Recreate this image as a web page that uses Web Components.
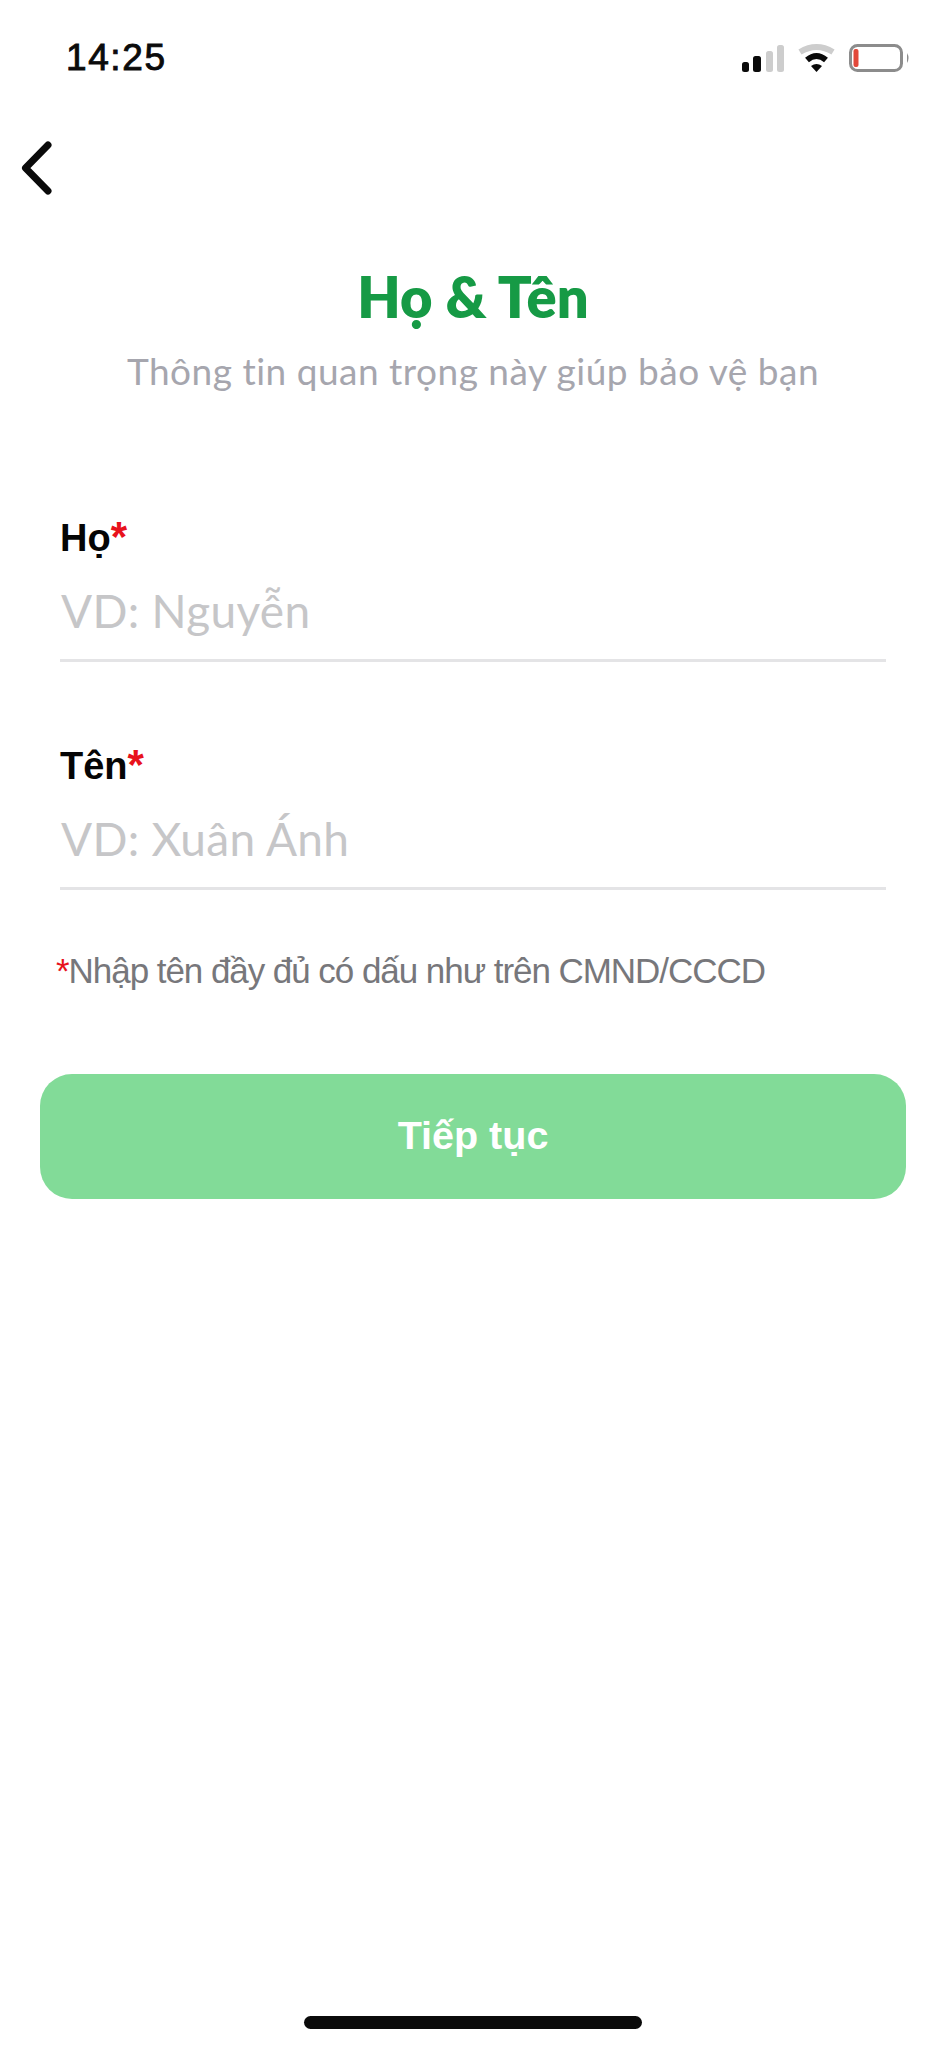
<!DOCTYPE html>
<html lang="vi">
<head>
<meta charset="utf-8">
<title>Họ & Tên</title>
<style>
  html, body { margin: 0; background: #fff; }
  body { width: 946px; height: 2048px; overflow: hidden; }
</style>
</head>
<body>
<name-screen>
  <status-bar slot="status" time="14:25"></status-bar>
  <back-button slot="nav"></back-button>
  <screen-heading slot="heading" title="Họ &amp; Tên" sub="Thông tin quan trọng này giúp bảo vệ bạn"></screen-heading>
  <name-field label="Họ" hint="VD: Nguyễn"></name-field>
  <name-field label="Tên" hint="VD: Xuân Ánh" style="margin-top:82px"></name-field>
  <form-note>Nhập tên đầy đủ có dấu như trên CMND/CCCD</form-note>
  <next-button>Tiếp tục</next-button>
</name-screen>

<script>
class NameScreen extends HTMLElement {
  constructor() {
    super();
    this.attachShadow({ mode: 'open' });
  }
  connectedCallback() {
    this.shadowRoot.innerHTML = `
<style>
  :host { display: flex; flex-direction: column; width: 946px; height: 2048px; position: relative; background: #fff; }
  #form { display: flex; flex-direction: column; padding: 0 40px 0 40px; }
  #bar { flex: 1; display: flex; align-items: flex-end; justify-content: center; padding-bottom: 19px; }
  #bar i { display: block; width: 338px; height: 13px; border-radius: 7px; background: #0a0a0a; }
</style>
<slot name="status"></slot>
<slot name="nav"></slot>
<slot name="heading"></slot>
<div id="form"><slot></slot></div>
<div id="bar"><i></i></div>`;
  }
}

class StatusBar extends HTMLElement {
  constructor() {
    super();
    this.attachShadow({ mode: 'open' });
  }
  connectedCallback() {
    this.shadowRoot.innerHTML = `
<style>
  :host { display: flex; align-items: flex-start; justify-content: space-between; height: 90px; padding: 36px 36px 0 66px; box-sizing: border-box; }
  #time { font: 400 37px/44px "Liberation Sans", Arial, sans-serif; color: #0b0b0b; letter-spacing: 1.6px; -webkit-text-stroke: .9px #0b0b0b; }
  svg { display: block; }
</style>
<div id="time">${this.getAttribute('time')}</div>
<svg width="172" height="34" viewBox="0 0 172 34" style="margin-top:4px">
  <rect x="4" y="22" width="7" height="10" rx="2.5" fill="#0a0a0a"/>
  <rect x="15" y="16" width="8" height="16" rx="2.5" fill="#0a0a0a"/>
  <rect x="28" y="11" width="7" height="21" rx="2.5" fill="#cdcdcd"/>
  <rect x="39" y="5" width="7" height="27" rx="2.5" fill="#cdcdcd"/>
  <path d="M62 12 Q78.5 2 95 12" fill="none" stroke="#cdcdcd" stroke-width="6"/>
  <path d="M69 20 Q78.5 12 88 20" fill="none" stroke="#0a0a0a" stroke-width="6"/>
  <path d="M73 26 Q78.5 22 84 26 L78.5 32Z" fill="#0a0a0a"/>
  <rect x="112.5" y="5.5" width="51" height="25" rx="7" fill="none" stroke="#8c8c8c" stroke-width="3"/>
  <rect x="115.5" y="9" width="5" height="18" rx="2" fill="#e2483a"/>
  <path d="M169 13 Q172 18 169 23Z" fill="#8c8c8c"/>
</svg>`;
  }
}

class BackButton extends HTMLElement {
  constructor() {
    super();
    this.attachShadow({ mode: 'open' });
  }
  connectedCallback() {
    this.shadowRoot.innerHTML = `
<style>
  :host { display: block; height: 114px; padding: 50px 0 0 20px; box-sizing: border-box; }
  svg { display: block; }
</style>
<svg width="36" height="58" viewBox="0 0 36 58">
  <path d="M28 5 L5.5 28 L28 51" fill="none" stroke="#0a0a0a" stroke-width="7" stroke-linecap="round" stroke-linejoin="round"/>
</svg>`;
  }
}

class ScreenHeading extends HTMLElement {
  constructor() {
    super();
    this.attachShadow({ mode: 'open' });
  }
  connectedCallback() {
    this.shadowRoot.innerHTML = `
<style>
  :host { display: block; text-align: center; height: 312px; font-family: Lato, "Noto Sans", sans-serif; }
  h1 { margin: 0; padding-top: 61px; font-size: 56px; line-height: 64px; font-weight: 800; color: #169a45; }
  p { margin: 20px 0 0; font-size: 37px; line-height: 44px; letter-spacing: .5px; color: #a6a6ae; }
</style>
<h1>${this.getAttribute('title').replace('&', '&amp;')}</h1>
<p>${this.getAttribute('sub')}</p>`;
  }
}

class NameField extends HTMLElement {
  constructor() {
    super();
    this.attachShadow({ mode: 'open' });
  }
  connectedCallback() {
    this.shadowRoot.innerHTML = `
<style>
  :host { display: block; margin: 0 20px 0 20px; }
  #lab { font: 700 38px/44px "Liberation Sans", Arial, sans-serif; color: #050505; }
  #lab b { color: #e8121c; font-size: 42px; line-height: 0; }
  #hint { font: 400 46px/56px Lato, "Noto Sans", sans-serif; letter-spacing: .3px; color: #c6c6c8; margin-top: 23px; padding: 0 0 20px 1px; border-bottom: 3px solid #e4e4e6; }
</style>
<div id="lab">${this.getAttribute('label')}<b>*</b></div>
<div id="hint">${this.getAttribute('hint')}</div>`;
  }
}

class FormNote extends HTMLElement {
  constructor() {
    super();
    this.attachShadow({ mode: 'open' });
  }
  connectedCallback() {
    this.shadowRoot.innerHTML = `
<style>
  :host { display: block; margin: 59px 0 0 16px; font: 400 35px/44px "Liberation Sans", Arial, sans-serif; color: #77777b; letter-spacing: -1.05px; }
  b { color: #e8121c; font-weight: 400; }
</style>
<b>*</b><slot></slot>`;
  }
}

class NextButton extends HTMLElement {
  constructor() {
    super();
    this.attachShadow({ mode: 'open' });
  }
  connectedCallback() {
    this.shadowRoot.innerHTML = `
<style>
  :host { display: flex; align-items: center; justify-content: center; height: 125px; box-sizing: border-box; padding-bottom: 4px; margin-top: 81px; border-radius: 32px; background: #82db98; color: #fff; font: 700 39.5px/44px "Liberation Sans", Arial, sans-serif; }
</style>
<slot></slot>`;
  }
}

customElements.define('name-screen', NameScreen);
customElements.define('status-bar', StatusBar);
customElements.define('back-button', BackButton);
customElements.define('screen-heading', ScreenHeading);
customElements.define('name-field', NameField);
customElements.define('form-note', FormNote);
customElements.define('next-button', NextButton);
</script>
</body>
</html>
